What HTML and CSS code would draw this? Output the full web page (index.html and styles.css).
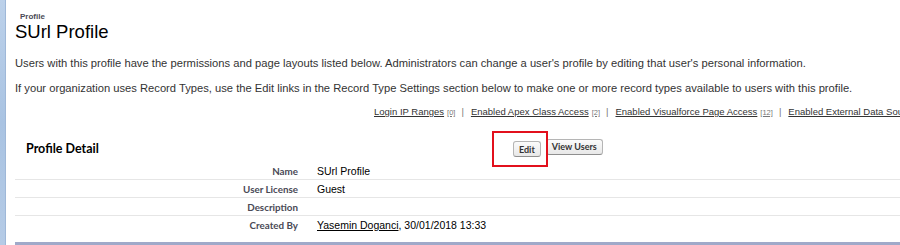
FILE: index.html
```html
<!DOCTYPE html>
<html lang="en">
<head>
  <meta charset="UTF-8">
  <meta name="viewport" content="width=device-width, initial-scale=1.0">
  <title>SUrl Profile</title>
  <link rel="stylesheet" href="styles.css">
</head>
<body>

  <div class="page">
    <div class="side-strip"></div>

    <div class="main">
      <div class="page-title">
        <div class="page-type">Profile</div>
        <h1>SUrl Profile</h1>
      </div>

      <p class="intro">Users with this profile have the permissions and page layouts listed below. Administrators can change a user's profile by editing that user's personal information.</p>
      <p class="intro">If your organization uses Record Types, use the Edit links in the Record Type Settings section below to make one or more record types available to users with this profile.</p>

      <div class="related-links">
        <a href="#">Login IP Ranges</a><span class="count">[0]</span>
        <span class="sep">|</span>
        <a href="#">Enabled Apex Class Access</a><span class="count">[2]</span>
        <span class="sep">|</span>
        <a href="#">Enabled Visualforce Page Access</a><span class="count">[12]</span>
        <span class="sep">|</span>
        <a href="#">Enabled External Data Source Access</a><span class="count">[0]</span>
      </div>

      <div class="detail-block">
        <div class="detail-header">
          <h2>Profile Detail</h2>
          <div class="buttons">
            <span class="highlight-wrap">
              <button class="btn">Edit</button>
              <span class="highlight"></span>
            </span>
            <button class="btn">View Users</button>
          </div>
        </div>

        <div class="detail-row">
          <div class="label">Name</div>
          <div class="value">SUrl Profile</div>
        </div>
        <div class="detail-row">
          <div class="label">User License</div>
          <div class="value">Guest</div>
        </div>
        <div class="detail-row">
          <div class="label">Description</div>
          <div class="value"></div>
        </div>
        <div class="detail-row last">
          <div class="label">Created By</div>
          <div class="value"><a href="#">Yasemin Doganci</a>, 30/01/2018 13:33</div>
        </div>
      </div>
    </div>
  </div>

</body>
</html>
```

FILE: styles.css
```css
body {
  margin: 0;
  padding: 0;
  font-family: 'Liberation Sans', Arial, sans-serif;
  color: #333;
  background: #fff;
  overflow: hidden;
}

.page {
  display: flex;
  min-height: 245px;
}

.side-strip {
  width: 5px;
  flex-shrink: 0;
  background: linear-gradient(180deg, #bcd1ea 0%, #a9c3e2 50%, #b5cbe6 100%);
  border-right: 1px solid #9fb8d8;
}

.main {
  flex: 1;
  min-width: 0;
  overflow: hidden;
  padding: 12px 0 0 9px;
}

.page-type {
  margin-left: 5px;
  font-size: 8px;
  font-weight: bold;
  color: #4a4a56;
  line-height: 10px;
}

h1 {
  margin: 0;
  font-size: 18.5px;
  font-weight: normal;
  color: #000;
  line-height: 20px;
}

.intro {
  margin: 0;
  padding-top: 15px;
  font-size: 11.2px;
  line-height: 12px;
  white-space: nowrap;
}

.intro + .intro {
  padding-top: 13px;
}

.related-links {
  display: flex;
  align-items: baseline;
  white-space: nowrap;
  padding: 12px 0 0 359px;
  font-size: 9.5px;
  line-height: 12px;
}

.related-links a {
  color: #333;
  text-decoration: underline;
}

.count {
  margin-left: 3px;
  font-size: 7.5px;
  color: #777;
  text-decoration: underline;
}

.sep {
  margin: 0 7px 0 6px;
  color: #777;
}

.detail-block {
  margin-top: 15px;
  border-bottom: 3px solid #a0a9c9;
  padding-bottom: 9px;
}

.detail-header {
  display: flex;
  align-items: center;
  height: 28px;
}

.detail-header h2 {
  width: 498px;
  margin: 0;
  padding-left: 11px;
  box-sizing: border-box;
  font-family: Lato, sans-serif;
  font-size: 12.5px;
  font-weight: bold;
  color: #000;
}

.buttons {
  display: flex;
  gap: 5px;
}

.btn {
  height: 16px;
  padding: 0 5px;
  font-family: Lato, sans-serif;
  font-size: 9px;
  font-weight: bold;
  color: #333;
  background: linear-gradient(180deg, #fbfbfb 0%, #e8e8e8 100%);
  border: 1px solid #b5b5b5;
  border-bottom-color: #8f8f8f;
  border-radius: 3px;
  cursor: pointer;
}

.highlight-wrap {
  position: relative;
  display: inline-block;
}

.highlight {
  position: absolute;
  left: -21px;
  top: -8px;
  width: 52px;
  height: 32px;
  border: 2px solid #e2101c;
}

.detail-row {
  display: flex;
  align-items: center;
  height: 17px;
  border-bottom: 1px solid #e6e6e6;
  font-size: 10.5px;
}

.detail-row.last {
  border-bottom: none;
}

.label {
  width: 283px;
  flex-shrink: 0;
  text-align: right;
  font-family: Lato, sans-serif;
  font-size: 9.8px;
  font-weight: bold;
  color: #4a4a56;
}

.value {
  padding-left: 19px;
  color: #000;
}

.value a {
  color: #000;
  text-decoration: underline;
}
```
